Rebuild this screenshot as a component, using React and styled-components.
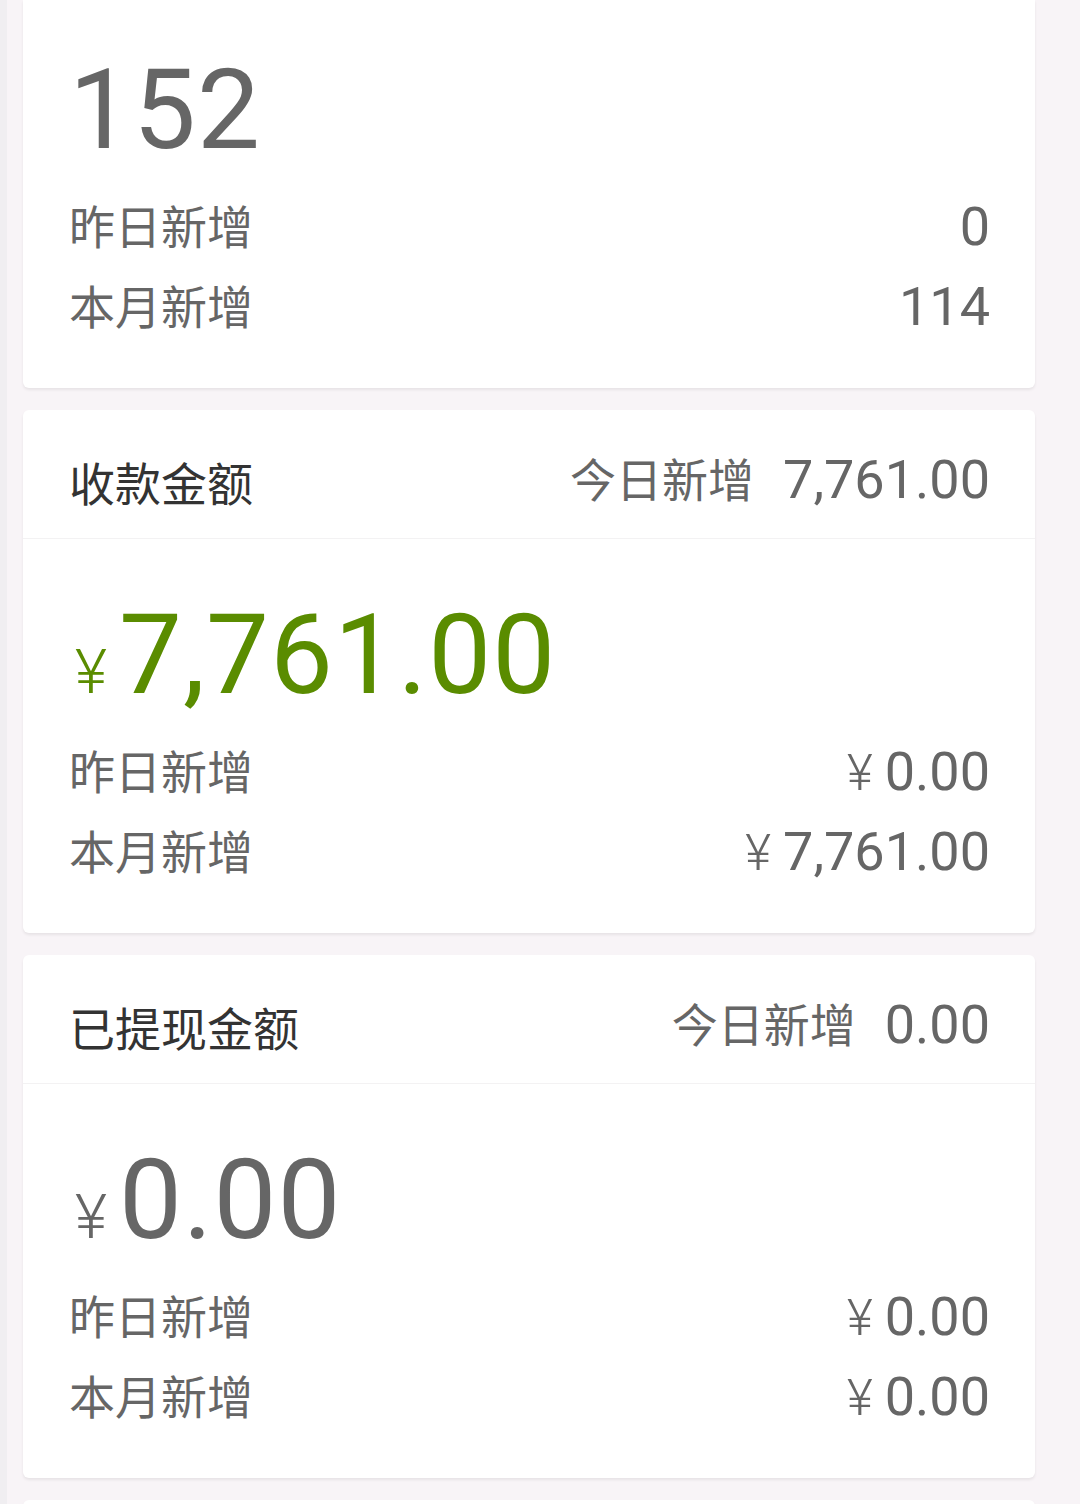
import React from "react";
import styled, { createGlobalStyle } from "styled-components";

const GlobalStyle = createGlobalStyle`
  html, body {
    margin: 0;
    padding: 0;
    background: #f8f4f7;
  }
  body {
    font-family: Roboto, "Noto Sans CJK SC", sans-serif;
    -webkit-font-smoothing: antialiased;
  }
`;

const Page = styled.div`
  display: flex;
  flex-direction: column;
  gap: 22px;
  min-height: 1504px;
  box-sizing: border-box;
  padding: 0 45px 0 16px;
  border-left: 7px solid #f0eef1;
  background: #f8f4f7;
`;

const Card = styled.div`
  display: flex;
  flex-direction: column;
  background: #ffffff;
  border-radius: ${(p) => (p.$cut ? "0 0 6px 6px" : "6px")};
  box-shadow: 0 2px 3px rgba(0, 0, 0, 0.07);
  min-height: ${(p) => (p.$stub ? "120px" : "auto")};
`;

const Header = styled.div`
  display: flex;
  align-items: center;
  justify-content: space-between;
  height: 129px;
  box-sizing: border-box;
  padding: 18px 45px 0 46px;
  border-bottom: 1px solid #f3f2f3;
`;

const Title = styled.div`
  font-family: "Noto Sans CJK SC", sans-serif;
  font-size: 46px;
  line-height: 1;
  padding-bottom: 4px;
  color: #333333;
`;

const Today = styled.div`
  display: flex;
  align-items: center;
  gap: 29px;
  margin-bottom: 6px;
  color: #666666;
`;

const Body = styled.div`
  display: flex;
  flex-direction: column;
  padding: ${(p) => (p.$first ? "54px" : "60px")} 45px 41px 46px;
`;

const Amount = styled.div`
  font-family: Roboto, sans-serif;
  font-size: 112px;
  line-height: 112px;
  letter-spacing: 1px;
  color: ${(p) => (p.$green ? "#5a8c00" : "#666666")};
  margin-bottom: 21px;
  white-space: nowrap;
`;

const AmountYen = styled.span`
  font-size: 62px;
  line-height: 1;
  letter-spacing: 0;
  margin: 0 12px 0 6px;
  font-weight: 300;
`;

const Row = styled.div`
  display: flex;
  align-items: center;
  justify-content: space-between;
  height: 80px;
`;

const Label = styled.span`
  font-family: "Noto Sans CJK SC", sans-serif;
  font-size: 46px;
  line-height: 1;
  padding-bottom: 6px;
  color: #666666;
`;

const Value = styled.span`
  font-family: Roboto, sans-serif;
  font-size: 54px;
  line-height: 1;
  color: #666666;
  white-space: nowrap;
`;

const Yen = styled.span`
  font-size: 50px;
  font-weight: 300;
  margin-right: 12px;
`;

const Money = ({ v }) => (
  <Value>
    <Yen>¥</Yen>
    {v}
  </Value>
);

const Stats = ({ rows }) =>
  rows.map((r) => (
    <Row key={r.label}>
      <Label>{r.label}</Label>
      {r.money ? <Money v={r.value} /> : <Value>{r.value}</Value>}
    </Row>
  ));

const MoneyCard = ({ title, today, total, green, rows }) => (
  <Card>
    <Header>
      <Title>{title}</Title>
      <Today>
        <Label>今日新增</Label>
        <Value>{today}</Value>
      </Today>
    </Header>
    <Body>
      <Amount $green={green}>
        <AmountYen>¥</AmountYen>
        {total}
      </Amount>
      <Stats rows={rows} />
    </Body>
  </Card>
);

export default function App() {
  return (
    <>
      <GlobalStyle />
      <Page>
        <Card $cut>
          <Body $first>
            <Amount>152</Amount>
            <Stats
              rows={[
                { label: "昨日新增", value: "0" },
                { label: "本月新增", value: "114" },
              ]}
            />
          </Body>
        </Card>
        <MoneyCard
          title="收款金额"
          today="7,761.00"
          total="7,761.00"
          green
          rows={[
            { label: "昨日新增", value: "0.00", money: true },
            { label: "本月新增", value: "7,761.00", money: true },
          ]}
        />
        <MoneyCard
          title="已提现金额"
          today="0.00"
          total="0.00"
          rows={[
            { label: "昨日新增", value: "0.00", money: true },
            { label: "本月新增", value: "0.00", money: true },
          ]}
        />
        <Card $stub />
      </Page>
    </>
  );
}
